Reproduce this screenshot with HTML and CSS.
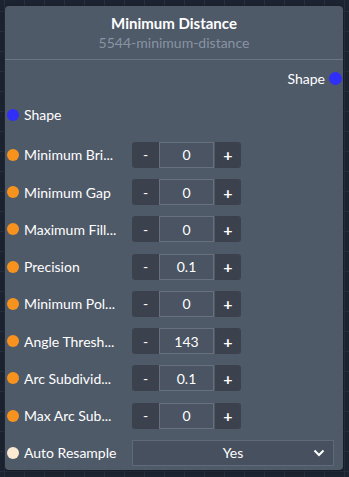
FILE: index.html
```html
<!DOCTYPE html>
<html lang="en">
<head>
    <meta charset="UTF-8">
    <meta name="viewport" content="width=device-width, initial-scale=1.0">
    <title>Minimum Distance Node</title>
    <link rel="stylesheet" href="styles.css">
</head>
<body>

<div class="node">
    <!-- Header -->
    <div class="node-header">
        <div class="node-title">Minimum Distance</div>
        <div class="node-id">5544-minimum-distance</div>
    </div>

    <!-- Outputs -->
    <div class="node-output">
        <span>Shape</span>
        <span class="dot dot-shape"></span>
    </div>

    <!-- Inputs -->
    <div class="node-input">
        <span class="dot dot-shape"></span>
        <span class="label">Shape</span>
    </div>

    <div class="node-input">
        <span class="dot dot-number"></span>
        <span class="label">Minimum Bri...</span>
        <div class="stepper"><button class="step">-</button><input class="step-value" value="0"><button class="step">+</button></div>
    </div>
    <div class="node-input">
        <span class="dot dot-number"></span>
        <span class="label">Minimum Gap</span>
        <div class="stepper"><button class="step">-</button><input class="step-value" value="0"><button class="step">+</button></div>
    </div>
    <div class="node-input">
        <span class="dot dot-number"></span>
        <span class="label">Maximum Fill...</span>
        <div class="stepper"><button class="step">-</button><input class="step-value" value="0"><button class="step">+</button></div>
    </div>
    <div class="node-input">
        <span class="dot dot-number"></span>
        <span class="label">Precision</span>
        <div class="stepper"><button class="step">-</button><input class="step-value" value="0.1"><button class="step">+</button></div>
    </div>
    <div class="node-input">
        <span class="dot dot-number"></span>
        <span class="label">Minimum Pol...</span>
        <div class="stepper"><button class="step">-</button><input class="step-value" value="0"><button class="step">+</button></div>
    </div>
    <div class="node-input">
        <span class="dot dot-number"></span>
        <span class="label">Angle Thresh...</span>
        <div class="stepper"><button class="step">-</button><input class="step-value" value="143"><button class="step">+</button></div>
    </div>
    <div class="node-input">
        <span class="dot dot-number"></span>
        <span class="label">Arc Subdivid...</span>
        <div class="stepper"><button class="step">-</button><input class="step-value" value="0.1"><button class="step">+</button></div>
    </div>
    <div class="node-input">
        <span class="dot dot-number"></span>
        <span class="label">Max Arc Sub...</span>
        <div class="stepper"><button class="step">-</button><input class="step-value" value="0"><button class="step">+</button></div>
    </div>
    <div class="node-input">
        <span class="dot dot-bool"></span>
        <span class="label">Auto Resample</span>
        <div class="select">
            <span class="select-text">Yes</span>
            <svg class="chevron" width="12" height="8" viewBox="0 0 12 8"><path d="M1.5 1.5 L6 6 L10.5 1.5" fill="none" stroke="#ffffff" stroke-width="2"/></svg>
        </div>
    </div>
</div>

</body>
</html>
```

FILE: styles.css
```css
body {
    margin: 0;
    padding: 6px 6px 0 5px;
    font-family: 'Lato', 'Liberation Sans', sans-serif;
    background-color: #1d2431;
    background-image:
        linear-gradient(#283040 1px, transparent 1px),
        linear-gradient(90deg, #283040 1px, transparent 1px);
    background-size: 20px 20px;
    background-position: 4px 11px;
    height: 477px;
    box-sizing: border-box;
    overflow: hidden;
}

.node {
    width: 338px;
    height: 464px;
    box-sizing: border-box;
    background-color: #4f5a69;
    border-radius: 4px;
    box-shadow: 0 1px 4px rgba(0, 0, 0, 0.4);
    color: #ffffff;
    font-size: 14px;
}

.node-header {
    text-align: center;
    padding: 8px 0 7px;
    border-bottom: 1px solid #6a7584;
}

.node-title {
    font-weight: bold;
    font-size: 15px;
    line-height: 18px;
}

.node-id {
    color: #8894a3;
    font-size: 14px;
    line-height: 19px;
    margin-top: 1px;
}

.node-output {
    display: flex;
    align-items: center;
    justify-content: flex-end;
    gap: 4px;
    height: 20px;
    margin-top: 8px;
    margin-right: 1px;
}

.node-input {
    display: flex;
    align-items: center;
    height: 37.25px;
    padding-left: 2px;
}

.node-output + .node-input {
    margin-top: 8px;
    margin-bottom: 3px;
}

.dot {
    width: 12px;
    height: 12px;
    border-radius: 50%;
    flex: none;
}

.node-output .dot {
    width: 13px;
    height: 13px;
}

.dot-shape {
    background-color: #2f2ff7;
}

.dot-number {
    background-color: #f7921e;
}

.dot-bool {
    background-color: #fbe9d2;
}

.label {
    margin-left: 5px;
    width: 106px;
    white-space: nowrap;
    overflow: hidden;
}

.stepper {
    display: flex;
    height: 26px;
    margin-left: 2px;
}

.step {
    width: 27px;
    height: 26px;
    border: none;
    background-color: #3b424e;
    color: #ffffff;
    font-family: inherit;
    font-size: 14px;
    padding: 0;
}

.step:first-child {
    border-radius: 3px 0 0 3px;
}

.step:last-child {
    width: 26px;
    margin-left: 1px;
    font-size: 16px;
    font-weight: bold;
    border-radius: 0 3px 3px 0;
}

.step-value {
    width: 55px;
    height: 26px;
    box-sizing: border-box;
    border: 1px solid #66717f;
    background-color: #4a5462;
    color: #ffffff;
    text-align: center;
    font-family: inherit;
    font-size: 14px;
    padding: 0;
}

.select {
    display: flex;
    align-items: center;
    justify-content: center;
    position: relative;
    width: 202px;
    height: 26px;
    box-sizing: border-box;
    margin-left: 2px;
    border: 1px solid #5f6a79;
    background-color: #46505e;
}

.chevron {
    position: absolute;
    right: 8px;
    top: 8px;
}
```
